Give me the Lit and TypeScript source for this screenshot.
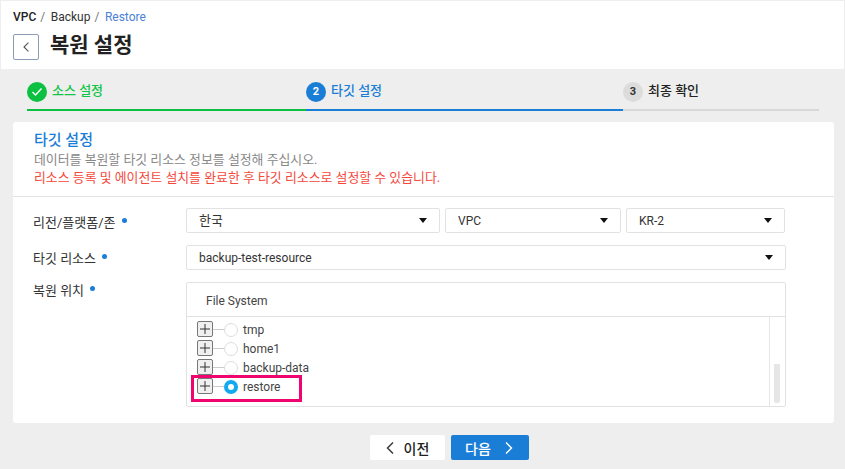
import { html, css, LitElement, svg } from 'lit';
import { customElement } from 'lit/decorators.js';

const chevron = (dir: 'left' | 'right') =>
  svg`<svg class="chev" width="10" height="14" viewBox="0 0 10 14" fill="none" stroke="currentColor" stroke-width="1.4">
    <path d=${dir === 'left' ? 'M8 1.5 2.5 7 8 12.5' : 'M2 1.5 7.5 7 2 12.5'}></path>
  </svg>`;

const caret = html`<span class="caret"></span>`;

const treeItems = ['tmp', 'home1', 'backup-data', 'restore'];

@customElement('app-root')
export class AppRoot extends LitElement {
  static styles = css`
    :host {
      display: block;
      width: 845px;
      height: 469px;
      overflow: hidden;
      background: #eeeeee;
      color: #222;
      font-family: Roboto, 'Noto Sans CJK KR', sans-serif;
      font-size: 12px;
    }
    .header {
      height: 68px;
      margin: 1px 1px 0 1px;
      background: #fff;
      padding: 9px 0 0 12px;
      box-sizing: border-box;
    }
    .crumbs {
      display: flex;
      gap: 4px;
      height: 14px;
      line-height: 14px;
      font-size: 12px;
      color: #333;
    }
    .crumbs b { font-weight: 500; color: #222; }
    .crumbs i { font-style: normal; color: #777; margin-right: 1.5px; }
    .crumbs .now { color: #4a7fd8; }
    .title-row {
      display: flex;
      align-items: center;
      gap: 11px;
      margin-top: 10px;
    }
    .back {
      width: 26px;
      height: 26px;
      box-sizing: border-box;
      border: 1px solid #8c9db5;
      border-radius: 2px;
      display: flex;
      align-items: center;
      justify-content: center;
      color: #555;
    }
    .back .chev { width: 8px; height: 12px; }
    h1 {
      margin: -4px 0 0;
      font-size: 21px;
      line-height: 26px;
      font-weight: 700;
      color: #222;
    }
    .steps {
      display: grid;
      grid-template-columns: 279px 317px 196px;
      margin: 13px 0 0 27px;
      width: 792px;
    }
    .step {
      display: flex;
      align-items: flex-start;
      gap: 5px;
      height: 29px;
      box-sizing: border-box;
      line-height: 18px;
      border-bottom: 2px solid #d8d8d8;
      font-size: 13px;
      font-weight: 500;
      color: #222;
    }
    .step.done { border-color: #0cc041; color: #12c447; }
    .step.active { border-color: #1b7ed6; color: #1b7ed6; }
    .dot {
      width: 20px;
      height: 20px;
      border-radius: 50%;
      background: #dcdcdc;
      color: #333;
      font-size: 11px;
      font-weight: 700;
      display: flex;
      align-items: center;
      justify-content: center;
    }
    .done .dot { background: #0cc041; color: #fff; }
    .active .dot { background: #1b7ed6; color: #fff; }
    .card {
      position: relative;
      margin: 11px 11px 0 13px;
      height: 301px;
      background: #fff;
      border-radius: 3px;
    }
    .intro {
      height: 75px;
      box-sizing: border-box;
      padding: 8px 21px 0;
      border-bottom: 1px solid #e4e4e4;
    }
    h2 {
      margin: 0 0 2px;
      height: 19px;
      line-height: 21px;
      font-size: 15px;
      font-weight: 500;
      color: #1b7ed6;
    }
    .intro p {
      margin: 0;
      height: 18px;
      line-height: 18px;
      font-size: 12.9px;
      color: #888;
    }
    .intro p.warn { color: #f5483c; }
    .form {
      display: grid;
      grid-template-columns: 173px 600px;
      row-gap: 12px;
      padding: 11px 0 0 0;
    }
    .label {
      padding: 5px 0 0 20px;
      font-size: 13px;
      color: #333;
      line-height: 18px;
    }
    .label.region { padding-top: 6px; }
    .label.place { padding-top: 0; }
    .label::after {
      content: '';
      display: inline-block;
      width: 5px;
      height: 5px;
      margin: 0 0 4px 6px;
      border-radius: 50%;
      background: #1b7ed6;
    }
    .selects { display: flex; gap: 5px; }
    .select {
      height: 25px;
      box-sizing: border-box;
      border: 1px solid #e2e2e2;
      border-radius: 2px;
      display: flex;
      align-items: center;
      justify-content: space-between;
      padding: 0 12px 0 12px;
      font-size: 12px;
      color: #333;
    }
    .selects .select:nth-child(1) { width: 254px; }
    .selects .select:nth-child(2) { width: 176px; }
    .selects .select:nth-child(3) { width: 159px; }
    .ko { font-size: 13px; line-height: 16px; margin-top: 1px; }
    .caret {
      width: 0;
      height: 0;
      border-left: 4px solid transparent;
      border-right: 4px solid transparent;
      border-top: 5px solid #111;
    }
    .panel {
      height: 125px;
      box-sizing: border-box;
      border: 1px solid #e2e2e2;
      border-radius: 2px;
      display: flex;
      flex-direction: column;
    }
    .panel-head {
      height: 34px;
      flex: none;
      box-sizing: border-box;
      padding-left: 19px;
      line-height: 37px;
      border-bottom: 1px solid #e2e2e2;
      font-size: 12px;
      color: #444;
    }
    .panel-body { flex: 1; display: flex; min-height: 0; }
    .tree { flex: 1; padding: 3px 0 0 10px; }
    .node {
      display: flex;
      align-items: center;
      height: 19px;
      font-size: 12px;
      color: #444;
    }
    .plus {
      width: 16px;
      height: 16px;
      margin-top: -2px;
      box-sizing: border-box;
      border: 1px solid #777;
      border-radius: 2px;
      background: #f0f0f0;
    }
    .plus svg { display: block; }
    .wire { width: 11px; height: 1px; background: #ccc; }
    .radio {
      width: 14px;
      height: 14px;
      box-sizing: border-box;
      border: 1px solid #ddd;
      border-radius: 50%;
      margin-right: 5px;
    }
    .radio.on { border: 4px solid #12a9ee; }
    .track {
      width: 16px;
      flex: none;
      box-sizing: border-box;
      border-left: 1px solid #e6e6e6;
      padding: 47px 5px 3px 4px;
      display: flex;
    }
    .thumb {
      flex: 1;
      background: #e6e6e6;
      border-radius: 0 0 2px 2px;
    }
    .mark {
      position: absolute;
      left: 178px;
      top: 253px;
      width: 111px;
      height: 27px;
      box-sizing: border-box;
      border: 3px solid #f0046f;
    }
    .footer {
      display: flex;
      justify-content: center;
      gap: 6px;
      margin-top: 12px;
      padding-left: 53px;
    }
    .btn {
      height: 25px;
      box-sizing: border-box;
      border-radius: 2px;
      display: flex;
      align-items: center;
      justify-content: center;
      font-size: 14px;
      font-weight: 500;
      background: #fff;
      color: #222;
      border: none;
      padding: 0;
      font-family: inherit;
    }
    .btn.prev { width: 75px; gap: 9px; }
    .btn.next { width: 78px; gap: 13px; background: #1b7ed6; color: #fff; }
    .prev .chev { color: #333; }
  `;

  render() {
    return html`
      <div class="header">
        <div class="crumbs">
          <span><b>VPC</b></span><i>/</i><span>Backup</span><i>/</i><span class="now">Restore</span>
        </div>
        <div class="title-row">
          <div class="back">${chevron('left')}</div>
          <h1>복원 설정</h1>
        </div>
      </div>

      <div class="steps">
        <div class="step done">
          <span class="dot">
            <svg width="12" height="10" viewBox="0 0 12 10" fill="none" stroke="#fff" stroke-width="1.4"><path d="M1.5 5 4.5 8 10.5 1.5"></path></svg>
          </span>
          소스 설정
        </div>
        <div class="step active"><span class="dot">2</span>타깃 설정</div>
        <div class="step"><span class="dot">3</span>최종 확인</div>
      </div>

      <div class="card">
        <div class="intro">
          <h2>타깃 설정</h2>
          <p>데이터를 복원할 타깃 리소스 정보를 설정해 주십시오.</p>
          <p class="warn">리소스 등록 및 에이전트 설치를 완료한 후 타깃 리소스로 설정할 수 있습니다.</p>
        </div>
        <div class="form">
          <div class="label region">리전/플랫폼/존</div>
          <div class="selects">
            <div class="select"><span class="ko">한국</span>${caret}</div>
            <div class="select">VPC${caret}</div>
            <div class="select">KR-2${caret}</div>
          </div>
          <div class="label">타깃 리소스</div>
          <div class="select">backup-test-resource${caret}</div>
          <div class="label place">복원 위치</div>
          <div class="panel">
            <div class="panel-head">File System</div>
            <div class="panel-body">
              <div class="tree">
                ${treeItems.map(
                  item => html`<div class="node">
                    <span class="plus">
                      <svg width="14" height="14" viewBox="0 0 14 14" stroke="#333" stroke-width="1"><path d="M7 2v10M2 7h10"></path></svg>
                    </span>
                    <span class="wire"></span>
                    <span class="radio ${item === 'restore' ? 'on' : ''}"></span>
                    ${item}
                  </div>`,
                )}
              </div>
              <div class="track"><div class="thumb"></div></div>
            </div>
          </div>
        </div>
        <div class="mark"></div>
      </div>

      <div class="footer">
        <button class="btn prev">${chevron('left')}이전</button>
        <button class="btn next">다음${chevron('right')}</button>
      </div>
    `;
  }
}
